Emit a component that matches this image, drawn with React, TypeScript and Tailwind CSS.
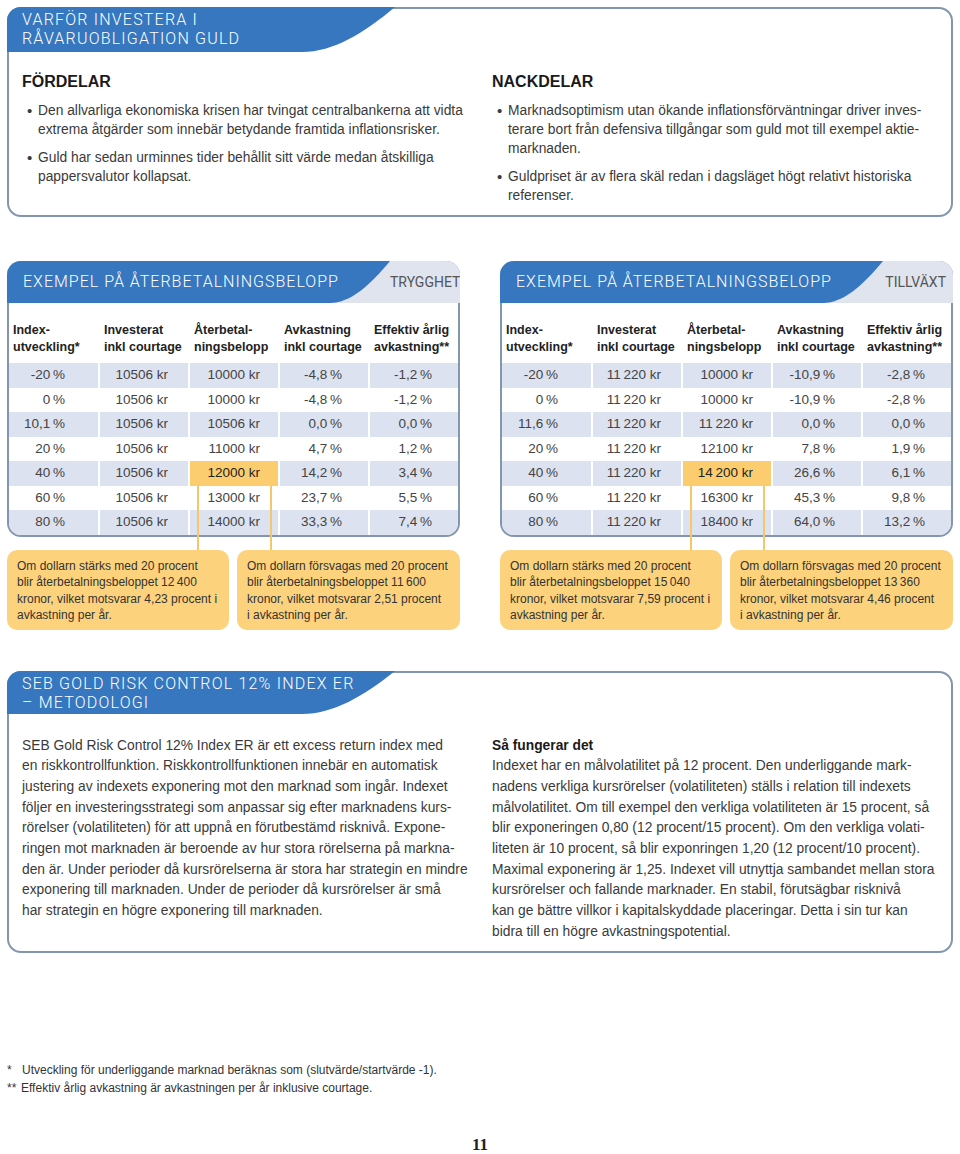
type Row = string[];

const headers = [
  ["Index-", "utveckling*"],
  ["Investerat", "inkl courtage"],
  ["Återbetal-", "ningsbelopp"],
  ["Avkastning", "inkl courtage"],
  ["Effektiv årlig", "avkastning**"],
];

const padRight = ["pr-[33px]", "pr-[20px]", "pr-[18px]", "pr-[26px]", "pr-[26px]"];

const trygghet: Row[] = [
  ["-20\u2009%", "10506 kr", "10000 kr", "-4,8\u2009%", "-1,2\u2009%"],
  ["0\u2009%", "10506 kr", "10000 kr", "-4,8\u2009%", "-1,2\u2009%"],
  ["10,1\u2009%", "10506 kr", "10506 kr", "0,0\u2009%", "0,0\u2009%"],
  ["20\u2009%", "10506 kr", "11000 kr", "4,7\u2009%", "1,2\u2009%"],
  ["40\u2009%", "10506 kr", "12000 kr", "14,2\u2009%", "3,4\u2009%"],
  ["60\u2009%", "10506 kr", "13000 kr", "23,7\u2009%", "5,5\u2009%"],
  ["80\u2009%", "10506 kr", "14000 kr", "33,3\u2009%", "7,4\u2009%"],
];

const tillvaxt: Row[] = [
  ["-20\u2009%", "11\u2009220 kr", "10000 kr", "-10,9\u2009%", "-2,8\u2009%"],
  ["0\u2009%", "11\u2009220 kr", "10000 kr", "-10,9\u2009%", "-2,8\u2009%"],
  ["11,6\u2009%", "11\u2009220 kr", "11\u2009220 kr", "0,0\u2009%", "0,0\u2009%"],
  ["20\u2009%", "11\u2009220 kr", "12100 kr", "7,8\u2009%", "1,9\u2009%"],
  ["40\u2009%", "11\u2009220 kr", "14\u2009200 kr", "26,6\u2009%", "6,1\u2009%"],
  ["60\u2009%", "11\u2009220 kr", "16300 kr", "45,3\u2009%", "9,8\u2009%"],
  ["80\u2009%", "11\u2009220 kr", "18400 kr", "64,0\u2009%", "13,2\u2009%"],
];

const Swoosh = ({ className }: { className: string }) => (
  <svg className={className} viewBox="0 0 90 43" preserveAspectRatio="none">
    <path d="M0 0H90C60 25 30 43 0 43Z" fill="#3677bf" />
  </svg>
);

const Lines = ({ lines }: { lines: string[] }) => (
  <>
    {lines.map((l) => (
      <div key={l} className="whitespace-nowrap">
        {l}
      </div>
    ))}
  </>
);

const Bullet = ({ lines }: { lines: string[] }) => (
  <div className="flex">
    <span className="w-[16px] shrink-0 pl-[5px] text-[15px]">•</span>
    <div>
      <Lines lines={lines} />
    </div>
  </div>
);

const Callout = ({ lines, wide }: { lines: string[]; wide?: boolean }) => (
  <div
    className={`h-[80px] rounded-[10px] bg-[#fdd27c] px-[10px] pt-[8px] text-[12px] leading-[16.5px] text-[#333] ${
      wide ? "w-[223px]" : "w-[222px]"
    }`}
  >
    <Lines lines={lines} />
  </div>
);

// blue banner with the curved right edge, used on the three boxes
const Banner = ({ lines, height }: { lines: string[]; height: string }) => (
  <div className={`-mt-[2px] -ml-[2px] flex ${height}`}>
    <div className="w-[295px] shrink-0 rounded-tl-[14px] bg-[#3677bf] pt-[3px] pl-[15px]">
      <div className="relative z-10 font-['Roboto',sans-serif] text-[16px] leading-[19px] font-light tracking-[1.2px] whitespace-nowrap text-white">
        <Lines lines={lines} />
      </div>
    </div>
    <Swoosh className="h-full w-[93px] shrink-0" />
  </div>
);

const ExampleTable = ({
  tag,
  rows,
  callouts,
}: {
  tag: string;
  rows: Row[];
  callouts: string[][];
}) => (
  <div className="relative">
    <div className="rounded-[14px] border-2 border-[#8296ae]">
      <div className="-mx-[2px] -mt-[2px] flex h-[42px] overflow-hidden rounded-t-[14px] bg-[#dfe4ef]">
        <div className="w-[323px] shrink-0 bg-[#3677bf] pl-[16px]">
          <div className="relative z-10 font-['Roboto',sans-serif] text-[16px] leading-[42px] font-light tracking-[1px] whitespace-nowrap text-white">
            EXEMPEL PÅ ÅTERBETALNINGSBELOPP
          </div>
        </div>
        <Swoosh className="h-[42px] w-[60px] shrink-0" />
        <div className="flex-1 pr-[7px] text-right font-['Roboto',sans-serif] text-[14px] leading-[42px] text-[#555]">
          {tag}
        </div>
      </div>
      <div className="overflow-hidden rounded-b-[12px]">
        <div className="grid grid-cols-[89px_88px_88px_88px_88px] gap-x-[2px] pt-[19px] pb-[7px] text-[12.5px] leading-[17px] font-bold text-[#222]">
          {headers.map((h) => (
            <div key={h[0]} className="pl-[4px] whitespace-nowrap">
              <div>{h[0]}</div>
              <div>{h[1]}</div>
            </div>
          ))}
        </div>
        {rows.map((r, i) => (
          <div key={i} className="grid h-[24.5px] grid-cols-[89px_88px_88px_88px_88px] gap-x-[2px] text-[13.5px] text-[#444]">
            {r.map((c, j) => (
              <div
                key={j}
                className={`flex items-center justify-end whitespace-nowrap ${padRight[j]} ${
                  i === 4 && j === 2 ? "bg-[#fbcd6f] text-[#222]" : i % 2 === 0 ? "bg-[#dce2ef]" : "bg-white"
                }`}
              >
                {c}
              </div>
            ))}
          </div>
        ))}
      </div>
    </div>
    <div className="mt-[13px] flex gap-[8px]">
      <Callout lines={callouts[0]} />
      <Callout lines={callouts[1]} wide />
    </div>
    <div className="absolute top-[225px] left-[190px] h-[64px] w-[2px] bg-[#f5c66b]" />
    <div className="absolute top-[225px] left-[263px] h-[64px] w-[2px] bg-[#f5c66b]" />
  </div>
);

export default function App() {
  return (
    <div className="h-[1154px] w-[960px] bg-white px-[7px] pt-[7px] font-['Liberation_Sans',Arial,sans-serif] text-[#3a3a3a]">
      {/* Varför investera */}
      <section className="h-[210px] rounded-[14px] border-2 border-[#8296ae]">
        <Banner lines={["VARFÖR INVESTERA I", "RÅVARUOBLIGATION GULD"]} height="h-[45px]" />
        <div className="grid grid-cols-[470px_1fr] pt-[20px] pl-[13px] text-[13.8px] leading-[19px]">
          <div>
            <h2 className="text-[16px] leading-[20px] font-bold text-[#1a1a1a]">FÖRDELAR</h2>
            <div className="mt-[9px] flex flex-col gap-[9px]">
              <Bullet
                lines={[
                  "Den allvarliga ekonomiska krisen har tvingat centralbankerna att vidta",
                  "extrema åtgärder som innebär betydande framtida inflationsrisker.",
                ]}
              />
              <Bullet
                lines={["Guld har sedan urminnes tider behållit sitt värde medan åtskilliga", "pappersvalutor kollapsat."]}
              />
            </div>
          </div>
          <div>
            <h2 className="text-[16px] leading-[20px] font-bold text-[#1a1a1a]">NACKDELAR</h2>
            <div className="mt-[9px] flex flex-col gap-[9px]">
              <Bullet
                lines={[
                  "Marknadsoptimism utan ökande inflationsförväntningar driver inves-",
                  "terare bort från defensiva tillgångar som guld mot till exempel aktie-",
                  "marknaden.",
                ]}
              />
              <Bullet lines={["Guldpriset är av flera skäl redan i dagsläget högt relativt historiska", "referenser."]} />
            </div>
          </div>
        </div>
      </section>

      {/* Exempel */}
      <div className="mt-[44px] grid grid-cols-[453px_453px] gap-x-[40px]">
        <ExampleTable
          tag="TRYGGHET"
          rows={trygghet}
          callouts={[
            [
              "Om dollarn stärks med 20 procent",
              "blir återbetalningsbeloppet 12\u2009400",
              "kronor, vilket motsvarar 4,23 procent i",
              "avkastning per år.",
            ],
            [
              "Om dollarn försvagas med 20 procent",
              "blir återbetalningsbeloppet 11\u2009600",
              "kronor, vilket motsvarar 2,51 procent",
              "i avkastning per år.",
            ],
          ]}
        />
        <ExampleTable
          tag="TILLVÄXT"
          rows={tillvaxt}
          callouts={[
            [
              "Om dollarn stärks med 20 procent",
              "blir återbetalningsbeloppet 15\u2009040",
              "kronor, vilket motsvarar 7,59 procent i",
              "avkastning per år.",
            ],
            [
              "Om dollarn försvagas med 20 procent",
              "blir återbetalningsbeloppet 13\u2009360",
              "kronor, vilket motsvarar 4,46 procent",
              "i avkastning per år.",
            ],
          ]}
        />
      </div>

      {/* Metodologi */}
      <section className="mt-[41px] h-[282px] rounded-[14px] border-2 border-[#8296ae]">
        <Banner lines={["SEB GOLD RISK CONTROL 12% INDEX ER", "– METODOLOGI"]} height="h-[43px]" />
        <div className="grid grid-cols-[470px_1fr] pt-[22px] pl-[13px] text-[13.8px] leading-[20.7px]">
          <div>
            <Lines
              lines={[
                "SEB Gold Risk Control 12% Index ER är ett excess return index med",
                "en riskkontrollfunktion. Riskkontrollfunktionen innebär en automatisk",
                "justering av indexets exponering mot den marknad som ingår. Indexet",
                "följer en investeringsstrategi som anpassar sig efter marknadens kurs-",
                "rörelser (volatiliteten) för att uppnå en förutbestämd risknivå. Expone-",
                "ringen mot marknaden är beroende av hur stora rörelserna på markna-",
                "den är. Under perioder då kursrörelserna är stora har strategin en mindre",
                "exponering till marknaden. Under de perioder då kursrörelser är små",
                "har strategin en högre exponering till marknaden.",
              ]}
            />
          </div>
          <div>
            <div className="font-bold text-[#1a1a1a]">Så fungerar det</div>
            <Lines
              lines={[
                "Indexet har en målvolatilitet på 12 procent. Den underliggande mark-",
                "nadens verkliga kursrörelser (volatiliteten) ställs i relation till indexets",
                "målvolatilitet. Om till exempel den verkliga volatiliteten är 15 procent, så",
                "blir exponeringen 0,80 (12 procent/15 procent). Om den verkliga volati-",
                "liteten är 10 procent, så blir exponringen 1,20 (12 procent/10 procent).",
                "Maximal exponering är 1,25. Indexet vill utnyttja sambandet mellan stora",
                "kursrörelser och fallande marknader. En stabil, förutsägbar risknivå",
                "kan ge bättre villkor i kapitalskyddade placeringar. Detta i sin tur kan",
                "bidra till en högre avkastningspotential.",
              ]}
            />
          </div>
        </div>
      </section>

      {/* Fotnoter */}
      <div className="mt-[108px] text-[12px] leading-[18px] text-[#333]">
        <div className="flex">
          <span className="w-[15px] shrink-0">*</span>
          <span>Utveckling för underliggande marknad beräknas som (slutvärde/startvärde -1).</span>
        </div>
        <div className="flex">
          <span className="w-[14px] shrink-0">**</span>
          <span>Effektiv årlig avkastning är avkastningen per år inklusive courtage.</span>
        </div>
      </div>

      <div className="mt-[38px] text-center font-['Liberation_Serif',serif] text-[17px] leading-[20px] font-bold text-[#222]">
        11
      </div>
    </div>
  );
}
